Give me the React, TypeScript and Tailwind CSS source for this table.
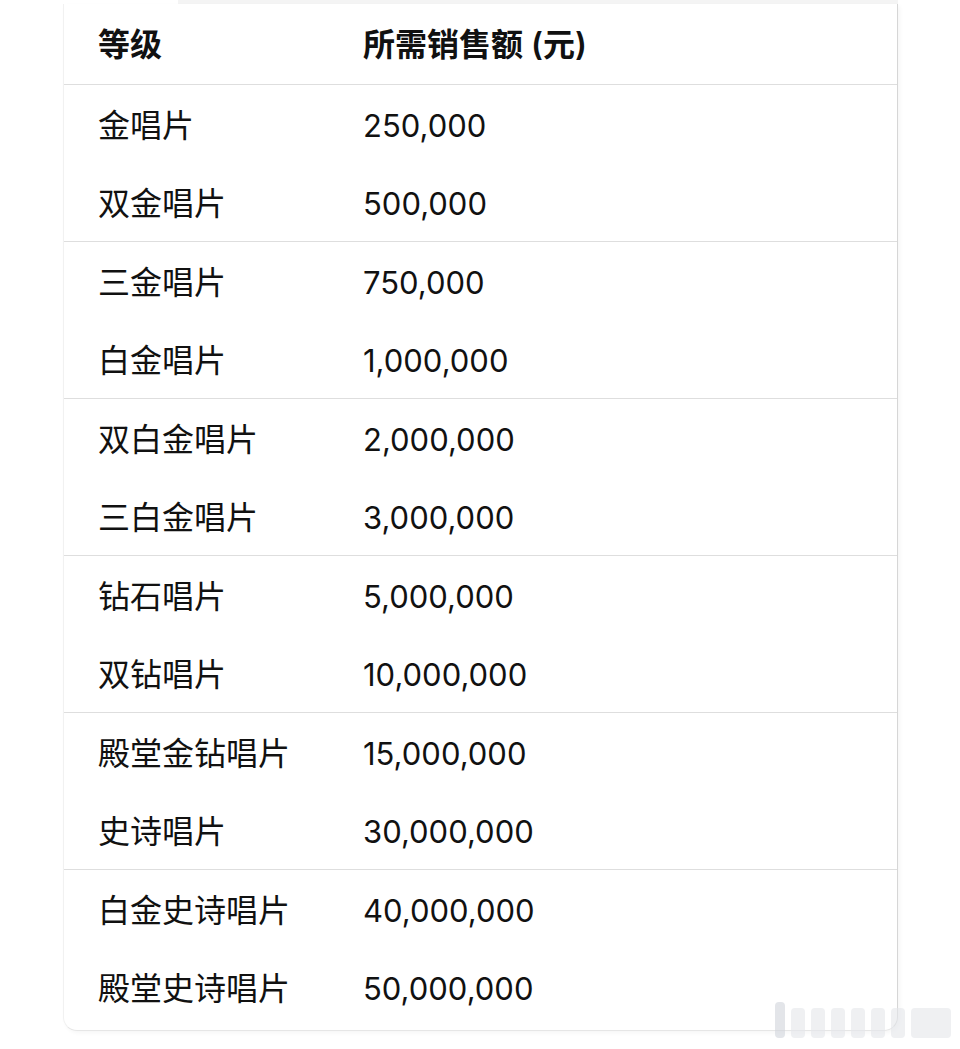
import React from "react";

type Row = { level: string; amount: string };

// 每两行一组，组与组之间有分隔线
const groups: Row[][] = [
  [
    { level: "金唱片", amount: "250,000" },
    { level: "双金唱片", amount: "500,000" },
  ],
  [
    { level: "三金唱片", amount: "750,000" },
    { level: "白金唱片", amount: "1,000,000" },
  ],
  [
    { level: "双白金唱片", amount: "2,000,000" },
    { level: "三白金唱片", amount: "3,000,000" },
  ],
  [
    { level: "钻石唱片", amount: "5,000,000" },
    { level: "双钻唱片", amount: "10,000,000" },
  ],
  [
    { level: "殿堂金钻唱片", amount: "15,000,000" },
    { level: "史诗唱片", amount: "30,000,000" },
  ],
  [
    { level: "白金史诗唱片", amount: "40,000,000" },
    { level: "殿堂史诗唱片", amount: "50,000,000" },
  ],
];

const font = "font-['Inter','Noto_Sans_CJK_SC',sans-serif]";

const Watermark = () => (
  <div className="absolute left-[775px] top-[1002px] flex items-end gap-[6px] opacity-60">
    <div className="w-[10px] h-[36px] rounded-sm bg-gray-300" />
    {Array.from({ length: 6 }).map((_, i) => (
      <div key={i} className="w-[14px] h-[30px] rounded-sm bg-gray-200" />
    ))}
    <div className="w-[40px] h-[30px] rounded-sm bg-gray-200" />
  </div>
);

export default function App() {
  return (
    <div className={`relative w-[960px] h-[1049px] bg-white overflow-hidden ${font} text-[#111]`}>
      <div className="ml-[63px] w-[835px]">
        <div className="h-[4px] ml-[115px] bg-[#f4f4f4]" />
        <div className="border-r border-b border-l border-[#f1f1f1] border-r-[#d6d6d6] border-b-[#e6e6e6] rounded-b-[14px] shadow-[2px_2px_4px_rgba(0,0,0,0.04)]">
          {/* 表头 */}
          <div className="grid grid-cols-[265px_1fr] h-[80px] items-center pl-[34px] pt-[2px] font-semibold">
            <div className="text-[32px]">等级</div>
            <div className="text-[32px]">所需销售额 (元)</div>
          </div>

          {groups.map((g, gi) => (
            <div key={gi} className="border-t border-[#dedede]">
              {g.map((r) => (
                <div
                  key={r.level}
                  className="grid grid-cols-[265px_1fr] h-[78px] items-center pl-[34px] pt-[4px]"
                >
                  <div className="text-[32px]">{r.level}</div>
                  <div className="text-[31px]">{r.amount}</div>
                </div>
              ))}
            </div>
          ))}
          <div className="h-[4px]" />
        </div>
      </div>
      <Watermark />
    </div>
  );
}
